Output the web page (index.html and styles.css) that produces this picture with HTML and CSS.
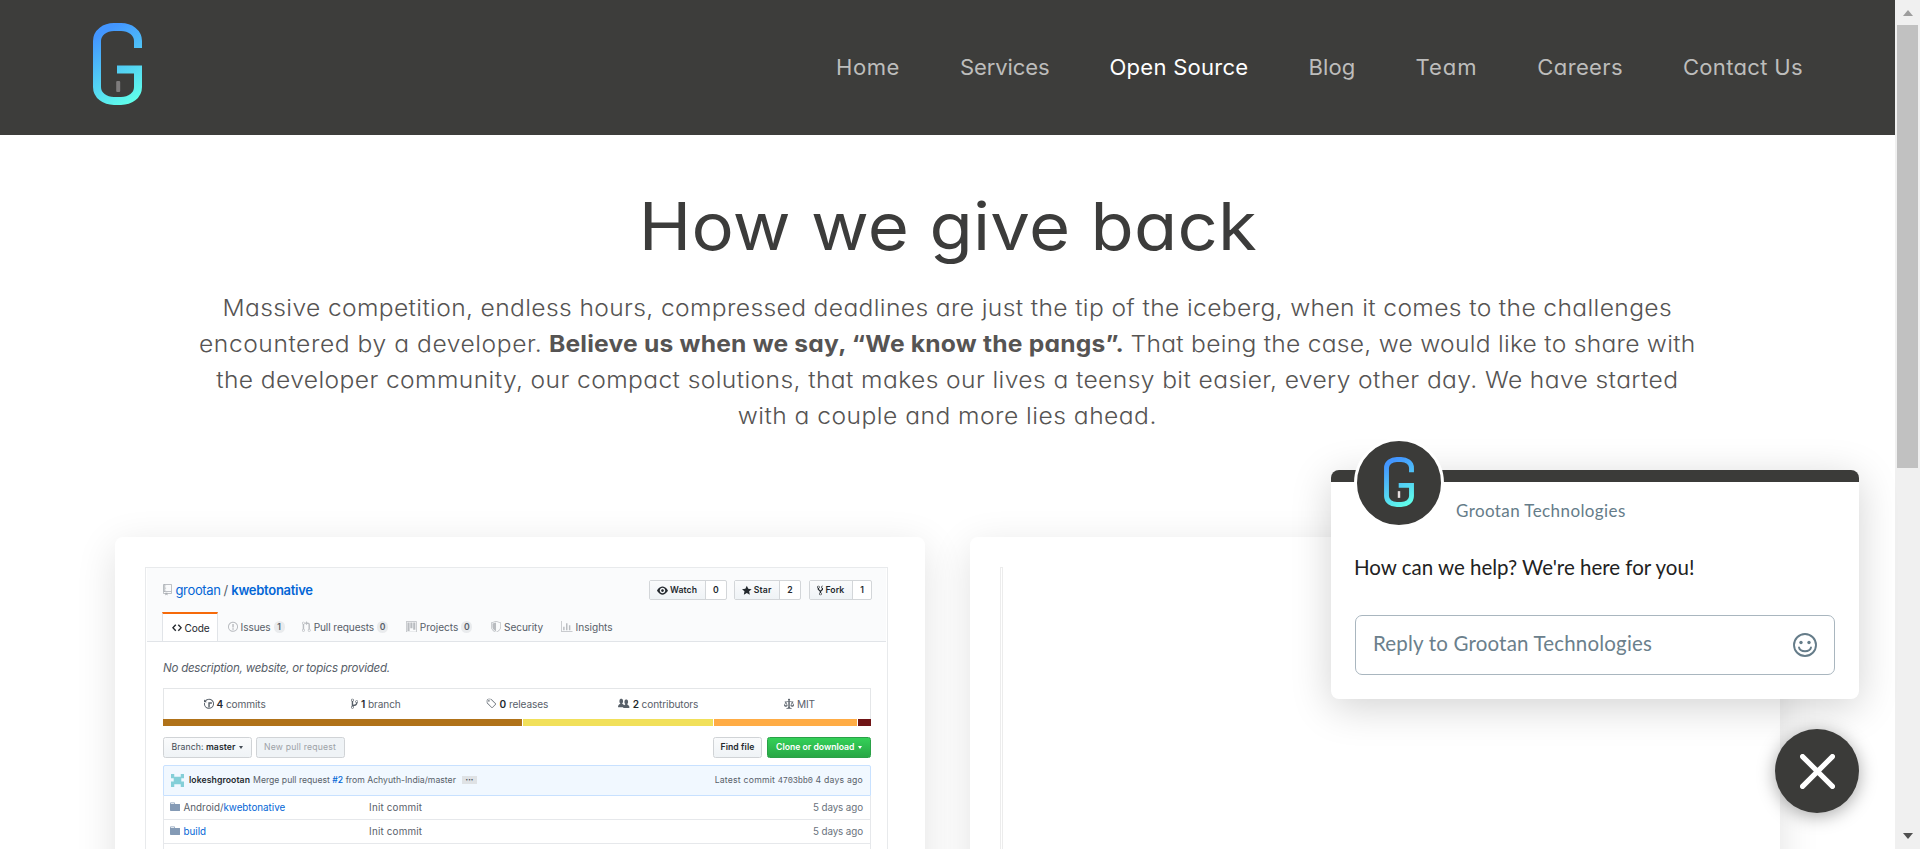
FILE: index.html
```
<!DOCTYPE html>
<html lang="en">
<head>
<meta charset="utf-8">
<title>Grootan Technologies - Open Source</title>
<link rel="stylesheet" href="styles.css">
</head>
<body>
<svg class="defs" width="0" height="0">
  <defs>
    <linearGradient id="g-fill" gradientUnits="userSpaceOnUse" x1="6" y1="12" x2="44" y2="76">
      <stop offset="0" stop-color="#4396ff"/><stop offset="1" stop-color="#60ffea"/>
    </linearGradient>
    <symbol id="logo" viewBox="0 0 49 82">
      <path d="M45 25V18C45 9.500 37 4 28 4H21C12 4 4 9.500 4 18V64C4 72.500 12 78 21 78H28C37 78 45 72.500 45 64V46.500H24" fill="none" stroke="url(#g-fill)" stroke-width="8"/>
    </symbol>
  </defs>
</svg>
<div class="window">
  <div class="page">
    <header class="header">
      <svg class="logo" viewBox="0 0 49 82"><use href="#logo"/><rect class="logo-bar" x="23.200" y="58" width="4" height="11" rx="1"/></svg>
      <nav class="nav">
        <a class="n1">Home</a>
        <a class="n2">Services</a>
        <a class="n3 active">Open Source</a>
        <a class="n4">Blog</a>
        <a class="n5">Team</a>
        <a class="n6">Careers</a>
        <a class="n7">Contact Us</a>
      </nav>
    </header>
    <section class="intro">
      <h1>How we give back</h1>
      <p>
        <span class="line"><span class="p1">Massive competition, endless hours, compressed deadlines are just the tip of the iceberg, when it comes to the challenges</span></span>
        <span class="line"><span class="p2">encountered by a developer.</span><b class="p3">Believe us when we say, “We know the pangs”.</b><span class="p4">That being the case, we would like to share with</span></span>
        <span class="line"><span class="p5">the developer community, our compact solutions, that makes our lives a teensy bit easier, every other day. We have started</span></span>
        <span class="line"><span class="p6">with a couple and more lies ahead.</span></span>
      </p>
    </section>
    <section class="cards">
      <article class="card">
        <div class="shot">
          <div class="shot-head">
            <div class="repo-row">
              <svg class="ic repo" viewBox="0 0 12 16"><path d="M4 9H3V8h1v1zm0-3H3v1h1V6zm0-2H3v1h1V4zm0-2H3v1h1V2zm8-1v12c0 .55-.45 1-1 1H6v2l-1.500-1.500L3 16v-2H1c-.55 0-1-.45-1-1V1c0-.55.45-1 1-1h10c.55 0 1 .45 1 1zm-1 10H1v2h2v-1h3v1h5v-2zm0-10H2v9h9V1z"/></svg>
              <a class="g1">grootan</a><span class="slash">/</span><a class="g2">kwebtonative</a>
              <div class="social">
                <div class="btn-pair watch"><span class="lab"><svg class="ic" viewBox="0 0 16 16"><path d="M8.060 2C3 2 0 8 0 8s3 6 8.060 6C13 14 16 8 16 8s-3-6-7.940-6zM8 12c-2.200 0-4-1.780-4-4 0-2.200 1.800-4 4-4 2.220 0 4 1.800 4 4 0 2.220-1.780 4-4 4zm2-4c0 1.110-.89 2-2 2-1.110 0-2-.89-2-2 0-1.110.89-2 2-2 1.110 0 2 .89 2 2z"/></svg><span class="s1">Watch</span></span><span class="cnt">0</span></div>
                <div class="btn-pair star"><span class="lab"><svg class="ic" viewBox="0 0 14 16"><path d="M14 6l-4.900-.64L7 1 4.900 5.360 0 6l3.600 3.260L2.670 14 7 11.670 11.330 14l-.93-4.740L14 6z"/></svg><span class="s2">Star</span></span><span class="cnt">2</span></div>
                <div class="btn-pair fork"><span class="lab"><svg class="ic" viewBox="0 0 10 16"><path d="M8 1a1.993 1.993 0 0 0-1 3.720V6L5 8 3 6V4.720A1.993 1.993 0 0 0 2 1a1.993 1.993 0 0 0-1 3.720V6.500l3 3v1.780A1.993 1.993 0 0 0 5 15a1.993 1.993 0 0 0 1-3.720V9.500l3-3V4.720A1.993 1.993 0 0 0 8 1zM2 4.200C1.340 4.200.8 3.650.8 3c0-.65.55-1.200 1.200-1.200.65 0 1.200.55 1.200 1.200 0 .65-.55 1.200-1.200 1.200zm3 10c-.66 0-1.200-.55-1.200-1.200 0-.65.55-1.200 1.200-1.200.65 0 1.200.55 1.200 1.200 0 .65-.55 1.200-1.200 1.200zm3-10c-.66 0-1.200-.55-1.200-1.200 0-.65.55-1.200 1.200-1.200.65 0 1.200.55 1.200 1.200 0 .65-.55 1.200-1.200 1.200z"/></svg><span class="s3">Fork</span></span><span class="cnt">1</span></div>
              </div>
            </div>
            <div class="tabs">
              <div class="tab code"><svg class="ic" viewBox="0 0 14 16"><path d="M9.500 3L8 4.500 11.500 8 8 11.500 9.500 13 14 8 9.500 3zm-5 0L0 8l4.500 5L6 11.500 2.500 8 6 4.500 4.500 3z"/></svg><span class="t1">Code</span></div>
              <div class="tab issues"><svg class="ic" viewBox="0 0 14 16"><path d="M7 2.300c3.140 0 5.700 2.560 5.700 5.700s-2.560 5.700-5.700 5.700A5.710 5.710 0 0 1 1.300 8c0-3.140 2.560-5.700 5.700-5.700zM7 1C3.140 1 0 4.140 0 8s3.140 7 7 7 7-3.140 7-7-3.140-7-7-7zm1 3H6v5h2V4zm0 6H6v2h2v-2z"/></svg><span class="t2">Issues</span><i>1</i></div>
              <div class="tab pulls"><svg class="ic" viewBox="0 0 12 16"><path d="M11 11.280V5c-.03-.78-.34-1.470-.94-2.060C9.460 2.350 8.780 2.030 8 2H7V0L4 3l3 3V4h1c.27.02.48.11.69.31.21.2.3.42.31.69v6.280A1.993 1.993 0 0 0 10 15a1.993 1.993 0 0 0 1-3.720zm-1 2.920c-.66 0-1.200-.55-1.200-1.200 0-.65.55-1.200 1.200-1.200.65 0 1.200.55 1.200 1.200 0 .65-.55 1.200-1.200 1.200zM4 3c0-1.110-.89-2-2-2a1.993 1.993 0 0 0-1 3.720v6.560A1.993 1.993 0 0 0 2 15a1.993 1.993 0 0 0 1-3.720V4.720c.59-.34 1-.98 1-1.720zm-.8 10c0 .66-.55 1.200-1.200 1.200-.65 0-1.200-.55-1.200-1.200 0-.65.55-1.200 1.200-1.200.65 0 1.200.55 1.200 1.200zM2 4.200C1.340 4.200.8 3.650.8 3c0-.65.55-1.200 1.200-1.200.65 0 1.200.55 1.200 1.200 0 .65-.55 1.200-1.200 1.200z"/></svg><span class="t3">Pull requests</span><i>0</i></div>
              <div class="tab projects"><svg class="ic" viewBox="0 0 15 16"><path d="M10 12h3V2h-3v10zm-4-2h3V2H6v8zm-4 4h3V2H2v12zm-1 1h13V1H1v14zM14 0H1a1 1 0 0 0-1 1v14a1 1 0 0 0 1 1h13a1 1 0 0 0 1-1V1a1 1 0 0 0-1-1z" fill-rule="evenodd"/></svg><span class="t4">Projects</span><i>0</i></div>
              <div class="tab security"><svg class="ic" viewBox="0 0 14 16"><path fill-rule="evenodd" d="M0 2l7-2 7 2v6.020C14 12.690 8.690 16 7 16c-1.690 0-7-3.310-7-7.980V2zm1 .75L7 1l6 1.750v5.268C13 12.104 8.449 15 7 15c-1.449 0-6-2.896-6-6.982V2.750zm1 .75L7 2v12c-1.207 0-5-2.482-5-5.985V3.500z"/></svg><span class="t5">Security</span></div>
              <div class="tab insights"><svg class="ic" viewBox="0 0 16 16"><path d="M16 14v1H0V0h1v14h15zM5 13H3V8h2v5zm4 0H7V3h2v10zm4 0h-2V6h2v7z"/></svg><span class="t6">Insights</span></div>
            </div>
          </div>
          <div class="shot-body">
            <div class="desc"><em class="d1">No description, website, or topics provided.</em></div>
            <div class="stats">
              <div class="stat"><svg class="ic" viewBox="0 0 14 16"><path d="M8 13H6V6h5v2H8v5zM7 1C4.810 1 2.870 2.020 1.590 3.590L0 2v4h4L2.500 4.500C3.550 3.170 5.170 2.300 7 2.300c3.140 0 5.700 2.560 5.700 5.700s-2.560 5.700-5.700 5.700A5.710 5.710 0 0 1 1.300 8c0-.34.03-.67.09-1H.08C.03 7.330 0 7.660 0 8c0 3.860 3.140 7 7 7s7-3.140 7-7-3.140-7-7-7z"/></svg><span class="a1"><b>4</b> commits</span></div>
              <div class="stat"><svg class="ic" viewBox="0 0 10 16"><path d="M10 5c0-1.110-.89-2-2-2a1.993 1.993 0 0 0-1 3.720v.3c-.02.52-.23.98-.63 1.380-.4.4-.86.61-1.380.63-.83.02-1.480.16-2 .45V4.720a1.993 1.993 0 0 0-1-3.720C.88 1 0 1.890 0 3a2 2 0 0 0 1 1.720v6.560c-.59.35-1 .99-1 1.720 0 1.110.89 2 2 2 1.110 0 2-.89 2-2 0-.53-.2-1-.53-1.360.09-.06.48-.41.59-.47.25-.11.56-.17.94-.17 1.050-.05 1.950-.45 2.750-1.250S8.950 7.770 9 6.730h-.02C9.590 6.370 10 5.730 10 5zM2 1.800c.66 0 1.200.55 1.200 1.200 0 .65-.55 1.200-1.200 1.200C1.350 4.200.8 3.650.8 3c0-.65.55-1.200 1.200-1.200zm0 12.410c-.66 0-1.200-.55-1.200-1.200 0-.65.55-1.200 1.200-1.200.65 0 1.200.55 1.200 1.200 0 .65-.55 1.200-1.200 1.200zm6-8c-.66 0-1.200-.55-1.200-1.200 0-.65.55-1.200 1.200-1.200.65 0 1.200.55 1.200 1.200 0 .65-.55 1.200-1.200 1.200z"/></svg><span class="a2"><b>1</b> branch</span></div>
              <div class="stat"><svg class="ic" viewBox="0 0 15 16"><path d="M7.685 1.720a2.490 2.490 0 0 0-1.760-.726H3.480A2.500 2.500 0 0 0 .994 3.480v2.456c0 .656.269 1.292.726 1.760l6.024 6.024a.99.99 0 0 0 1.402 0l4.563-4.563a.99.99 0 0 0 0-1.402L7.685 1.720zM2.366 7.048a1.540 1.540 0 0 1-.467-1.123V3.480c0-.874.716-1.580 1.580-1.580h2.456c.418 0 .825.159 1.123.467l6.104 6.094-4.702 4.702-6.094-6.114zm.626-4.066h1.989v1.989H2.982V2.982z"/></svg><span class="a3"><b>0</b> releases</span></div>
              <div class="stat"><svg class="ic" viewBox="0 0 16 16"><path d="M16 12.999c0 .439-.45 1-1 1H7.995c-.539 0-.994-.447-.995-.999H1c-.54 0-1-.561-1-1 0-2.634 3-4 3-4s.229-.409 0-1c-.841-.621-1.058-.59-1-3 .058-2.419 1.367-3 2.500-3s2.442.58 2.500 3c.058 2.410-.159 2.379-1 3-.229.59 0 1 0 1s1.549.711 2.420 2.088C9.196 9.369 10 8.999 10 8.999s.229-.409 0-1c-.841-.62-1.058-.59-1-3 .058-2.419 1.367-3 2.500-3s2.437.581 2.495 3c.059 2.410-.158 2.380-1 3-.229.59 0 1 0 1s3.005 1.366 3.005 4"/></svg><span class="a4"><b>2</b> contributors</span></div>
              <div class="stat"><svg class="ic" viewBox="0 0 14 16"><path d="M7 4c-.83 0-1.500-.67-1.500-1.500S6.170 1 7 1s1.500.67 1.500 1.500S7.830 4 7 4zm7 6c0 1.110-.89 2-2 2h-1c-1.110 0-2-.89-2-2l2-4h-1c-.55 0-1-.45-1-1H8v8c.42 0 1 .45 1 1h1c.42 0 1 .45 1 1H3c0-.55.58-1 1-1h1c0-.55.58-1 1-1h.03L6 5H5c0 .55-.45 1-1 1H3l2 4c0 1.110-.89 2-2 2H2c-1.110 0-2-.89-2-2l2-4H1V5h3c0-.55.45-1 1-1h4c.55 0 1 .45 1 1h3v1h-1l2 4zM2.500 7L1 10h3L2.500 7zM13 10l-1.500-3-1.500 3h3z"/></svg><span class="a5">MIT</span></div>
            </div>
            <div class="langs"><span class="java"></span><span class="js"></span><span class="swift"></span><span class="ruby"></span></div>
            <div class="actions">
              <span class="btn branch"><span class="b1">Branch: <b>master</b></span><span class="caret"></span></span>
              <span class="btn newpr"><span class="b2">New pull request</span></span>
              <span class="btn find"><span class="b3">Find file</span></span>
              <span class="btn clone"><span class="b4">Clone or download</span><span class="caret"></span></span>
            </div>
            <div class="commit">
              <svg class="avatar" viewBox="0 0 12 12"><path d="M0 0h3v2.500h6V0h3v4H9.500v3H12v5H9V9.500H3V12H0V7h2.500V4H0z"/></svg>
              <b class="c1">lokeshgrootan</b><span class="c2">Merge pull request <a>#2</a> from Achyuth-India/master</span><span class="dots">•••</span>
              <span class="c3">Latest commit <code>4703bb0</code> 4 days ago</span>
            </div>
            <div class="row"><svg class="ic" viewBox="0 0 14 16"><path d="M13 4H7V3c0-.66-.31-1-1-1H1c-.55 0-1 .45-1 1v10c0 .55.45 1 1 1h12c.55 0 1-.45 1-1V5c0-.55-.45-1-1-1zM6 4H1V3h5v1z"/></svg><span class="name">Android/<a>kwebtonative</a></span><span class="msg">Init commit</span><span class="age">5 days ago</span></div>
            <div class="row"><svg class="ic" viewBox="0 0 14 16"><path d="M13 4H7V3c0-.66-.31-1-1-1H1c-.55 0-1 .45-1 1v10c0 .55.45 1 1 1h12c.55 0 1-.45 1-1V5c0-.55-.45-1-1-1zM6 4H1V3h5v1z"/></svg><span class="name"><a>build</a></span><span class="msg">Init commit</span><span class="age">5 days ago</span></div>
            <div class="row"></div>
          </div>
        </div>
      </article>
      <article class="card"><div class="stub"></div></article>
    </section>
  </div>
  <div class="scrollbar"><span class="up"></span><span class="thumb"></span><span class="down"></span></div>
  <aside class="chat">
    <div class="chat-bar"></div>
    <div class="chat-logo"><svg viewBox="0 0 49 82"><use href="#logo"/><rect x="22.500" y="56" width="4" height="11" fill="#e6dfe0"/></svg></div>
    <div class="chat-name">Grootan Technologies</div>
    <div class="chat-msg">How can we help? We're here for you!</div>
    <div class="chat-input"><span class="placeholder">Reply to Grootan Technologies</span>
      <svg class="smile" viewBox="0 0 24 24"><circle cx="12" cy="12" r="11"/><path d="M6 14.500c1.200 5 10.800 5 12 0"/><ellipse class="eye" cx="8" cy="9.500" rx="1.700" ry="1.800"/><ellipse class="eye" cx="16" cy="9.500" rx="1.700" ry="1.800"/></svg>
    </div>
  </aside>
  <button class="close"><svg viewBox="0 0 34 34"><path d="M2.500 2.500l29 29M31.500 2.500l-29 29"/></svg></button>
</div>
</body>
</html>
```
FILE: styles.css
```
* { box-sizing: border-box; }
body { margin: 0; background: #fff; font-family: Inter, sans-serif; color: #3c3c3b; }
.defs { position: absolute; }
.window { position: relative; display: flex; width: 1920px; height: 849px; overflow: hidden; }
.page { width: 1895px; height: 849px; overflow: hidden; }

.header { display: flex; align-items: center; justify-content: space-between; height: 135px; padding: 0 92px 0 93px; background: #3d3d3b; }
.logo { width: 49px; height: 82px; margin-bottom: 7px; }
.logo-bar { fill: #7e7c7c; }
.nav { display: flex; gap: 57.140px; font-size: 21px; font-feature-settings: "cv11"; color: #bdbdbc; white-space: nowrap; transform: scaleX(1.05); transform-origin: right; }
.nav .active { color: #fff; }
.n1 { letter-spacing: .54px; }
.n2 { letter-spacing: -.12px; }
.n3 { letter-spacing: .24px; }
.n4 { letter-spacing: .11px; }
.n5 { letter-spacing: .9px; }
.n6 { letter-spacing: .32px; }
.n7 { letter-spacing: .29px; }

.intro { display: flex; flex-direction: column; align-items: center; height: 402px; padding-top: 49px; font-feature-settings: "cv11"; }
h1 { margin: 0; font-size: 66px; line-height: 84px; font-weight: 400; white-space: nowrap; letter-spacing: .25px; transform: scaleX(1.07); }
p { display: flex; flex-direction: column; align-items: center; margin: 22px 0 0; font-size: 23px; line-height: 36px; font-weight: 300; color: #565453; white-space: nowrap; transform: scaleX(1.07); }
.line { display: flex; gap: 6.200px; height: 36px; }
p b { font-weight: 700; }
.p1 { letter-spacing: .337px; }
.p2 { letter-spacing: .517px; }
.p3 { letter-spacing: .199px; }
.p4 { letter-spacing: .237px; }
.p5 { letter-spacing: .367px; }
.p6 { letter-spacing: .44px; }

.cards { display: flex; gap: 45px; padding-left: 115px; }
.card { width: 810px; height: 620px; padding: 30px; border-radius: 8px; background: #fff; box-shadow: 0 10px 40px rgba(0, 0, 0, .12); flex: none; }
.stub { width: 3px; height: 500px; border: 1px solid #ececec; border-bottom: 0; }

.shot { width: 743px; height: 500px; border: 1px solid #e8eaec; font-size: 10.1px; color: #586069; white-space: nowrap; }
.ic { height: 11.500px; fill: currentColor; flex: none; }
.shot a { color: #0366d6; }
.shot-head { display: flex; flex-direction: column; height: 74px; margin: 0 1px; background: #fafbfc; border-bottom: 1px solid #e1e4e8; padding: 0 14px 0 15px; }
.repo-row { display: flex; align-items: center; height: 45px; font-size: 13px; }
.repo { width: 9px; margin: 0 4px 0 .5px; color: #a9adb2; }
.slash { margin: 0 3px; }
.g1 { letter-spacing: -.35px; }
.g2 { font-weight: 600; letter-spacing: -.28px; }
.social { display: flex; margin-left: auto; font-size: 8.670px; font-weight: 600; color: #24292e; }
.btn-pair { display: flex; height: 20px; margin-left: 7.500px; border: 1px solid #d3d6d9; border-radius: 2px; background: #fff; }
.lab { display: flex; align-items: center; gap: 2px; padding-left: 7px; background: linear-gradient(#fafbfc, #eff3f6); border-right: 1px solid #d3d6d9; }
.lab .ic { height: 11px; }
.cnt { flex: 1; display: flex; align-items: center; justify-content: center; }
.s1 { letter-spacing: .08px; }
.s2 { letter-spacing: .24px; }
.s3 { letter-spacing: .11px; }
.watch { width: 77.500px; }
.watch .lab { width: 56px; }
.star { width: 67px; }
.star .lab { width: 45px; }
.fork { width: 63.500px; }
.fork .lab { width: 43.500px; }
.tabs { display: flex; height: 29px; }
.tab { display: flex; align-items: center; gap: 3px; height: 29px; }
.tab .ic { color: #b9bcc0; }
.tab i { font-style: normal; font-weight: 600; font-size: 8.670px; line-height: 12px; width: 11px; border-radius: 6px; background: #e9ebed; text-align: center; }
.code { width: 56px; padding-left: 8.500px; background: #fff; border: 1px solid #e1e4e8; border-top: 2px solid #f66a0a; border-bottom: 0; color: #24292e; letter-spacing: -.14px; }
.code .ic { color: #24292e; }
.issues { width: 75px; padding-left: 9.500px; letter-spacing: -.1px; }
.pulls { width: 104px; padding-left: 9px; letter-spacing: -.085px; }
.projects { width: 86px; padding-left: 9px; letter-spacing: -.035px; }
.security { width: 69px; padding-left: 8px; letter-spacing: -.09px; }
.insights { padding-left: 9px; }

.shot-body { padding: 0 16px 0 17px; }
.desc { display: flex; align-items: center; height: 46px; font-size: 11.550px; padding-top: 5px; letter-spacing: -.245px; }
.stats { display: flex; height: 31px; border: 1px solid #e4e6e8; border-bottom: 0; letter-spacing: -.11px; }
.stat { flex: 1; display: flex; align-items: center; justify-content: center; gap: 3px; }
.stat b { color: #24292e; font-weight: 600; }
.langs { display: flex; gap: 1px; height: 6.500px; }
.java { width: 358.500px; background: #b07219; }
.js { width: 190px; background: #f1e05a; }
.swift { width: 143.500px; background: #ffac45; }
.ruby { flex: 1; background: #701516; }
.actions { display: flex; height: 21px; margin-top: 11px; font-size: 8.670px; }
.btn { display: flex; align-items: center; justify-content: center; gap: 3.500px; border: 1px solid #d0d3d6; border-radius: 2.500px; background: linear-gradient(#fafbfc, #eff3f6); color: #24292e; }
.caret { border: 2.600px solid transparent; border-top: 3px solid currentColor; border-bottom: 0; }
.branch { width: 88.500px; color: #444d56; letter-spacing: .08px; }
.branch b { color: #24292e; font-weight: 600; }
.newpr { width: 89px; margin-left: 4px; color: #9da2a7; background: #eff3f6; letter-spacing: .19px; }
.find { width: 49px; margin-left: auto; font-weight: 600; letter-spacing: .08px; }
.clone { width: 104px; margin-left: 5px; font-weight: 600; color: #fff; background: linear-gradient(#34d058, #28a745); border-color: #2aa147; }
.commit { display: flex; align-items: center; height: 31px; margin-top: 7px; padding: 0 7px; border: 1px solid #c8e1ff; background: #f1f8ff; border-radius: 2px 2px 0 0; font-size: 8.670px; }
.avatar { width: 13px; height: 13px; margin-right: 5px; fill: #84cfd8; }
.commit b { color: #24292e; font-weight: 600; margin-right: 3px; letter-spacing: .08px; }
.commit a { font-weight: 500; }
.dots { width: 15px; height: 8px; margin-left: 6px; background: #dfe2e5; color: #444d56; font-size: 4.500px; line-height: 8px; text-align: center; }
.c3 { margin-left: auto; letter-spacing: .22px; }
code { font-family: "Liberation Mono", monospace; font-size: 8.600px; letter-spacing: -.15px; }
.row { display: flex; align-items: center; height: 24px; padding: 0 7px 0 6px; border: 1px solid #e6e8eb; border-top: 0; font-size: 9.800px; }
.row .ic { margin-right: 3.500px; color: #849ab5; }
.name { width: 185.500px; }
.msg { letter-spacing: .2px; }
.age { margin-left: auto; color: #6a737d; letter-spacing: -.08px; }

.scrollbar { display: flex; flex-direction: column; align-items: center; width: 25px; height: 849px; background: #f0f0f0; }
.up { margin-top: 10px; border: 5.500px solid transparent; border-bottom: 6px solid #9d9d9d; border-top: 0; }
.thumb { width: 21px; height: 443px; margin-top: 9px; background: #c1c1c1; }
.down { margin-top: auto; margin-bottom: 10px; border: 5.500px solid transparent; border-top: 6px solid #505050; border-bottom: 0; }

.chat { position: absolute; left: 1331px; top: 470px; width: 528px; height: 229px; border-radius: 8px; background: #fff; box-shadow: 0 8px 40px rgba(0, 0, 0, .18); font-family: Lato, sans-serif; white-space: nowrap; }
.chat-bar { height: 12px; border-radius: 8px 8px 0 0; background: #3b3b39; }
.chat-logo { position: absolute; left: 23px; top: -32px; width: 90px; height: 90px; display: flex; align-items: center; justify-content: center; border: 3px solid #fff; border-radius: 50%; background: #3b3b39; }
.chat-logo svg { width: 30px; height: 50px; margin-bottom: 2px; }
.chat-name { padding-left: 125px; margin-top: 15.500px; font-size: 17px; line-height: 26px; color: #657c89; letter-spacing: .402px; }
.chat-msg { padding-left: 23px; margin-top: 28px; font-size: 20.500px; line-height: 30px; color: #222; }
.chat-input { display: flex; align-items: center; justify-content: space-between; width: 480px; height: 60px; margin: 33px 0 0 24px; padding: 0 17px; border: 1px solid #a9b6bf; border-radius: 7px; font-size: 20.500px; color: #6b808c; }
.placeholder { margin-bottom: 3px; letter-spacing: .184px; }
.smile { width: 24px; height: 24px; fill: none; stroke: #657c89; stroke-width: 1.900; stroke-linecap: round; }
.smile .eye { fill: #657c89; stroke: none; }
.close { position: absolute; left: 1775px; top: 729px; width: 84px; height: 84px; display: flex; align-items: center; justify-content: center; padding: 0; border: 0; border-radius: 50%; background: #3b3b39; box-shadow: 0 3px 18px rgba(0, 0, 0, .35); }
.close svg { width: 35px; height: 35px; fill: none; stroke: #fff; stroke-width: 5; stroke-linecap: round; }
```
